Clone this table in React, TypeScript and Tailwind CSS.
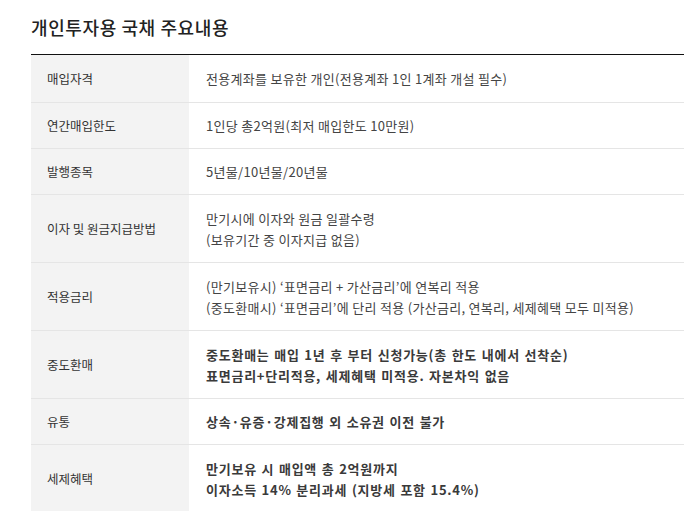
import React from "react";

type Row = {
  label: string;
  lines: string[];
  bold?: boolean;
};

const rows: Row[] = [
  { label: "매입자격", lines: ["전용계좌를 보유한 개인(전용계좌 1인 1계좌 개설 필수)"] },
  { label: "연간매입한도", lines: ["1인당 총2억원(최저 매입한도 10만원)"] },
  { label: "발행종목", lines: ["5년물/10년물/20년물"] },
  {
    label: "이자 및 원금지급방법",
    lines: ["만기시에 이자와 원금 일괄수령", "(보유기간 중 이자지급 없음)"],
  },
  {
    label: "적용금리",
    lines: [
      "(만기보유시) ‘표면금리 + 가산금리’에 연복리 적용",
      "(중도환매시) ‘표면금리’에 단리 적용 (가산금리, 연복리, 세제혜택 모두 미적용)",
    ],
  },
  {
    label: "중도환매",
    lines: [
      "중도환매는 매입 1년 후 부터 신청가능(총 한도 내에서 선착순)",
      "표면금리+단리적용, 세제혜택 미적용. 자본차익 없음",
    ],
    bold: true,
  },
  { label: "유통", lines: ["상속·유증·강제집행 외 소유권 이전 불가"], bold: true },
  {
    label: "세제혜택",
    lines: ["만기보유 시 매입액 총 2억원까지", "이자소득 14% 분리과세 (지방세 포함 15.4%)"],
    bold: true,
  },
];

export default function App() {
  return (
    <div
      className="w-[684px] h-[511px] overflow-hidden bg-white pl-[31px] pt-[16px]"
      style={{ fontFamily: '"Noto Sans CJK KR", "Noto Sans", sans-serif' }}
    >
      {/* Title */}
      <h2 className="text-[18px] leading-[22px] font-medium text-[#222] tracking-[0.6px]">
        개인투자용 국채 주요내용
      </h2>

      {/* Table */}
      <div className="mt-[16px] border-t-[1.5px] border-[#111]">
        {rows.map((row, i) => {
          const pad =
            i === 0 ? "py-[13px]" : row.lines.length > 1 ? "py-[12.5px]" : "py-[12px]";
          return (
            <div
              key={i}
              className="flex border-b border-[#e5e5e5] leading-[21px] text-[#333]"
            >
              <div
                className={`w-[158px] shrink-0 bg-[#f3f3f3] pl-[16px] flex items-center text-[12.5px] ${pad}`}
              >
                {row.label}
              </div>
              <div
                className={`flex-1 pl-[17px] flex flex-col justify-center text-[13px] ${pad} ${
                  row.bold
                    ? "font-bold text-[#3a3a3a] tracking-[0.75px] [word-spacing:1px]"
                    : "text-[#444] tracking-[0.3px]"
                }`}
              >
                {row.lines.map((line, j) => (
                  <div key={j}>{line}</div>
                ))}
              </div>
            </div>
          );
        })}
      </div>
    </div>
  );
}
